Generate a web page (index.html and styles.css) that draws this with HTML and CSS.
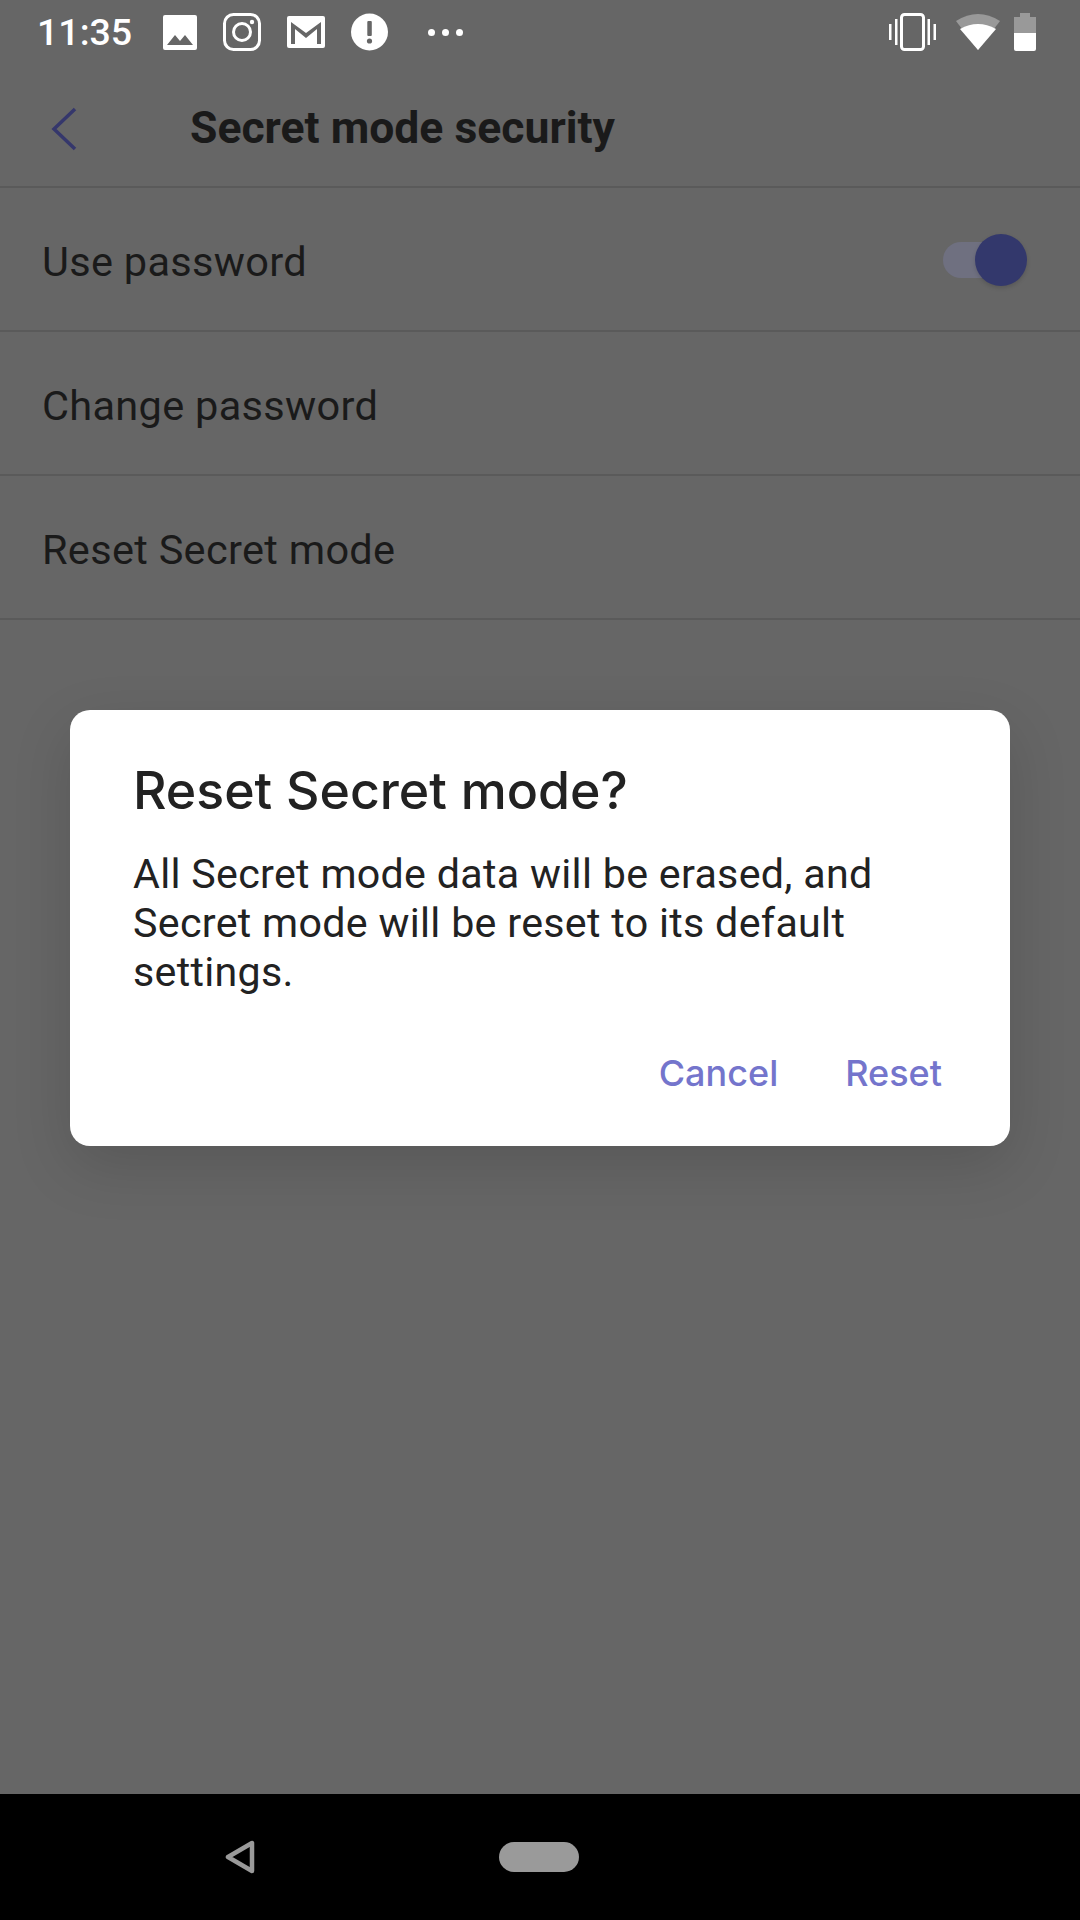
FILE: index.html
```html
<!DOCTYPE html>
<html lang="en">
<head>
  <meta charset="UTF-8">
  <meta name="viewport" content="width=device-width, initial-scale=1.0">
  <title>Secret mode security</title>
  <link rel="stylesheet" href="styles.css">
</head>
<body>
  <div class="screen">
    <div class="status-bar">
      <span class="clock">11:35</span>
      <div class="notif-icons">
        <svg width="34" height="35" viewBox="0 0 34 35"><rect width="34" height="35" rx="2" fill="#fff"/><path d="M4 30l8-10 5 6 5-6 8 10z" fill="#666"/></svg>
        <svg width="38" height="38" viewBox="0 0 38 38" fill="none" stroke="#fff"><rect x="1.500" y="1.500" width="35" height="35" rx="9" stroke-width="3"/><circle cx="19" cy="19" r="8.500" stroke-width="3"/><circle cx="29" cy="9" r="2.200" fill="#fff" stroke="none"/></svg>
        <svg width="38" height="32" viewBox="0 0 38 32"><rect width="38" height="32" rx="2" fill="#fff"/><path d="M4 28V6l15 11L34 6v22h-4V13L19 22 8 13v15z" fill="#666"/></svg>
        <svg width="37" height="38" viewBox="0 0 37 38"><circle cx="18.500" cy="19" r="18.500" fill="#fff"/><rect x="16.300" y="8" width="4.500" height="15" rx="1" fill="#666"/><circle cx="18.500" cy="28" r="2.600" fill="#666"/></svg>
        <div class="more-dots"><i></i><i></i><i></i></div>
      </div>
      <div class="system-icons">
        <svg class="vibrate" width="47" height="38" viewBox="0 0 47 38" fill="#fff"><rect x="0" y="11" width="2.500" height="16"/><rect x="6" y="6" width="2.500" height="26"/><rect x="38.500" y="6" width="2.500" height="26"/><rect x="44.500" y="11" width="2.500" height="16"/><rect x="12.500" y="1.500" width="22" height="35" rx="3" fill="none" stroke="#fff" stroke-width="3"/></svg>
        <svg width="44" height="36" viewBox="0 0 44 36"><path d="M0 7Q22-7 44 7L22 36z" fill="#999"/><path d="M4 15Q22 5 40 15L22 36z" fill="#fff"/></svg>
        <svg width="22" height="38" viewBox="0 0 22 38"><path d="M6 0h10v4h6v16H0V4h6z" fill="#999"/><path d="M0 20h22v16a2 2 0 0 1-2 2H2a2 2 0 0 1-2-2z" fill="#fff"/></svg>
      </div>
    </div>

    <header class="app-bar">
      <svg class="back" width="26" height="44" viewBox="0 0 26 44" fill="none"><path d="M24 2L3 22l21 20" stroke="#35376c" stroke-width="3.500"/></svg>
      <h1>Secret mode security</h1>
    </header>

    <section class="settings">
      <div class="row">
        <span>Use password</span>
        <div class="toggle"><div class="toggle-thumb"></div></div>
      </div>
      <div class="row"><span>Change password</span></div>
      <div class="row"><span>Reset Secret mode</span></div>
    </section>

    <div class="dialog">
      <h2>Reset Secret mode?</h2>
      <p>All Secret mode data will be erased, and Secret mode will be reset to its default settings.</p>
      <div class="dialog-actions">
        <button>Cancel</button>
        <button>Reset</button>
      </div>
    </div>
  </div>

  <nav class="nav-bar">
    <svg class="nav-back" width="30" height="34" viewBox="0 0 30 34" fill="none"><path d="M27 3v28L3 17z" stroke="#9a9a9a" stroke-width="4.500" stroke-linejoin="round"/></svg>
    <div class="nav-home"></div>
  </nav>
</body>
</html>
```
FILE: styles.css
```css
* {
  box-sizing: border-box;
}
body {
  margin: 0;
  width: 1080px;
  height: 1920px;
  font-family: Roboto, sans-serif;
  background: #666;
  color: #1a1a1a;
  display: flex;
  flex-direction: column;
}
.screen {
  position: relative;
  flex: 1;
}
.status-bar {
  height: 64px;
  padding: 0 44px 0 37px;
  display: flex;
  align-items: center;
  color: #fff;
}
.clock {
  font-size: 37.500px;
  font-weight: 500;
  width: 126px;
}
.notif-icons {
  display: flex;
  align-items: center;
  gap: 26px;
}
.notif-icons svg {
  display: block;
}
.more-dots {
  display: flex;
  gap: 7px;
  margin-left: 14px;
}
.more-dots i {
  width: 7px;
  height: 7px;
  border-radius: 50%;
  background: #fff;
}
.system-icons {
  margin-left: auto;
  display: flex;
  align-items: center;
  gap: 14px;
}
.system-icons svg {
  display: block;
}
.vibrate {
  margin-right: 6px;
}
.app-bar {
  height: 124px;
  padding: 0 0 0 51px;
  display: flex;
  align-items: center;
  border-bottom: 2px solid #5a5a5a;
}
.app-bar h1 {
  margin: 5px 0 0 113px;
  font-size: 44.500px;
  font-weight: 700;
}
.back {
  flex: none;
  margin-top: 8px;
}
.row {
  height: 144px;
  padding: 4px 61px 0 42px;
  display: flex;
  align-items: center;
  justify-content: space-between;
  border-bottom: 2px solid #5a5a5a;
  font-size: 41.500px;
  letter-spacing: 0.3px;
}
.toggle {
  width: 76px;
  height: 36px;
  margin-top: -2px;
  border-radius: 18px;
  background: #6f7080;
  position: relative;
}
.toggle-thumb {
  position: absolute;
  right: -8px;
  top: -8px;
  width: 52px;
  height: 52px;
  border-radius: 50%;
  background: #33386c;
  box-shadow: 0 2px 4px rgba(0, 0, 0, 0.15);
}
.dialog {
  position: absolute;
  left: 70px;
  top: 710px;
  width: 940px;
  height: 436px;
  padding: 50px 68px 0 63px;
  background: #fff;
  border-radius: 20px;
  box-shadow: 0 20px 60px rgba(0, 0, 0, 0.14);
  color: #222;
}
.dialog h2 {
  margin: 0;
  font-family: Inter, sans-serif;
  font-size: 51.800px;
  font-weight: 500;
  line-height: 60px;
}
.dialog p {
  margin: 30px 0 0;
  width: 820px;
  font-size: 41.200px;
  line-height: 49px;
  letter-spacing: 0.3px;
}
.dialog-actions {
  margin-top: 54px;
  display: flex;
  justify-content: flex-end;
  gap: 67px;
}
.dialog-actions button {
  padding: 0;
  border: none;
  background: none;
  font-family: Inter, sans-serif;
  font-size: 36px;
  font-weight: 500;
  color: #7475cc;
}
.nav-bar {
  height: 126px;
  background: #000;
  display: flex;
  align-items: center;
  padding: 0 0 0 225px;
}
.nav-back {
  flex: none;
  margin-top: -1px;
}
.nav-home {
  width: 80px;
  height: 30px;
  border-radius: 15px;
  background: #9a9a9a;
  margin-left: 244px;
}
```
